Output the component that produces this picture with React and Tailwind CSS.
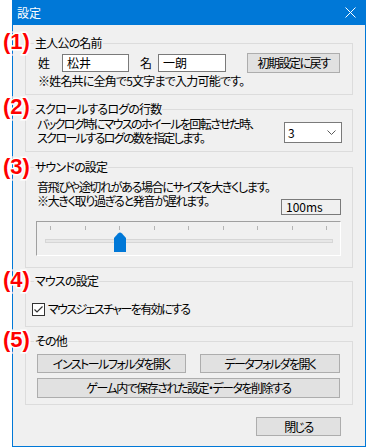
import React from 'react';

const font = "[font-family:'Noto_Sans_CJK_JP',sans-serif] [font-feature-settings:'palt']";

function Group({ title, className = '', children }) {
    return (
        <div className={`relative ml-[12px] w-[328px] border border-[#dcdcdc] ${className}`}>
            <span className="absolute left-[8px] -top-[9px] whitespace-nowrap bg-[#f0f0f0] px-px text-[12px] leading-[16px] tracking-[-0.8px]">
                {title}
            </span>
            {children}
        </div>
    );
}

function Btn({ className = '', children }) {
    return (
        <div className={`flex items-center justify-center whitespace-nowrap border border-[#adadad] bg-[#e1e1e1] text-[12px] leading-none tracking-[-1.5px] ${className}`}>
            {children}
        </div>
    );
}

function Num({ n, top }) {
    return (
        <span
            className="absolute left-[3px] text-[22px] font-bold leading-[22px] text-[#ff0000] [font-family:'Liberation_Sans',sans-serif] [-webkit-text-stroke:3px_#fff] [paint-order:stroke_fill]"
            style={{ top }}
        >
            ({n})
        </span>
    );
}

export default function App() {
    const ticks = [0, 1, 2, 3, 4, 5, 6, 7, 8];

    return (
        <div className={`relative h-[447px] w-[366px] bg-white text-black ${font}`}>
            <div className="ml-[12px] flex h-[447px] w-[354px] flex-col bg-[#0078d7] px-px pb-px">
                {/* Title bar */}
                <div className="flex h-[25px] items-center justify-between pl-[4px] pr-[9px] text-[12px] text-white">
                    <span>設定</span>
                    <svg width="11" height="11" viewBox="0 0 11 11">
                        <path d="M0.5 0.5 L10.5 10.5 M10.5 0.5 L0.5 10.5" stroke="#fff" strokeWidth="1" />
                    </svg>
                </div>

                {/* Body */}
                <div className="flex flex-1 flex-col bg-[#f0f0f0]">
                    {/* (1) */}
                    <Group title="主人公の名前" className="mt-[18px] h-[52px]">
                        <div className="mt-[9px] flex h-[20px] items-center pl-[12px] text-[12px]">
                            <span className="w-[12px]">姓</span>
                            <div className="ml-[12px] flex h-[18px] w-[67px] items-center border border-[#7a7a7a] bg-white pl-[4px]">松井</div>
                            <span className="ml-[11px] w-[12px]">名</span>
                            <div className="ml-[6px] flex h-[18px] w-[68px] items-center border border-[#7a7a7a] bg-white pl-[4px]">一朗</div>
                            <Btn className="ml-[21px] h-[20px] w-[93px]">初期設定に戻す</Btn>
                        </div>
                        <div className="mt-[1px] whitespace-nowrap pl-[12px] text-[12px] leading-[14px] tracking-[-0.8px]">
                            ※姓名共に全角で5文字まで入力可能です。
                        </div>
                    </Group>

                    {/* (2) */}
                    <Group title="スクロールするログの行数" className="mt-[14px] h-[43px]">
                        <div className="flex items-start pl-[11px] pr-[10px]">
                            <div className="mt-[7px] whitespace-nowrap text-[12px] leading-[14px] tracking-[-1.6px]">
                                バックログ時にマウスのホイールを回転させた時、<br />
                                スクロールするログの数を指定します。
                            </div>
                            <div className="ml-auto mt-[12px] flex h-[21px] w-[58px] shrink-0 items-center justify-between border border-[#7a7a7a] bg-white pl-[3px] pr-[5px] text-[12px]">
                                <span>3</span>
                                <svg width="9" height="5" viewBox="0 0 9 5">
                                    <path d="M0.5 0.5 L4.5 4.5 L8.5 0.5" fill="none" stroke="#5a5a5a" strokeWidth="1" />
                                </svg>
                            </div>
                        </div>
                    </Group>

                    {/* (3) */}
                    <Group title="サウンドの設定" className="mt-[15px] h-[101px]">
                        <div className="flex items-start pl-[11px] pr-[11px]">
                            <div className="mt-[12px] whitespace-nowrap text-[12px] leading-[14px] tracking-[-1.3px]">
                                音飛びや途切れがある場合にサイズを大きくします。<br />
                                ※大きく取り過ぎると発音が遅れます。
                            </div>
                            <div className="ml-auto mt-[31px] flex h-[16px] w-[60px] shrink-0 items-center border border-[#7a7a7a] bg-[#f0f0f0] pl-[4px] text-[12px]">
                                100ms
                            </div>
                        </div>
                        <div className="relative ml-[10px] mt-[6px] h-[35px] w-[305px] border border-b-white border-l-[#a0a0a0] border-r-white border-t-[#a0a0a0]">
                            <div className="ml-[13px] mt-[4px] flex h-[4px] w-[277px] justify-between">
                                {ticks.map((t) => (
                                    <div key={t} className="h-[4px] w-px bg-[#b4b4b4]" />
                                ))}
                            </div>
                            <div className="ml-[8px] mt-[9px] h-[4px] w-[288px] border border-[#d6d6d6] bg-[#e7e7e7]" />
                            <svg className="absolute left-[77px] top-[10px]" width="12" height="20" viewBox="0 0 12 20">
                                <path d="M0 6 L4 1.5 Q6 -0.5 8 1.5 L12 6 L12 20 L0 20 Z" fill="#0078d7" />
                            </svg>
                        </div>
                    </Group>

                    {/* (4) */}
                    <Group title="マウスの設定" className="mt-[13px] h-[46px]">
                        <div className="mt-[18px] flex items-center pl-[6px] text-[12px]">
                            <svg width="13" height="13" viewBox="0 0 13 13">
                                <rect x="0.5" y="0.5" width="12" height="12" fill="#fff" stroke="#333" />
                                <path d="M2.5 6.5 L5 9 L10.5 3.5" fill="none" stroke="#333" strokeWidth="1.2" />
                            </svg>
                            <span className="ml-[3px] tracking-[-1.6px]">マウスジェスチャーを有効にする</span>
                        </div>
                    </Group>

                    {/* (5) */}
                    <Group title="その他" className="mt-[14px] h-[64px]">
                        <div className="mt-[12px] flex pl-[11px]">
                            <Btn className="h-[19px] w-[149px]">インストールフォルダを開く</Btn>
                            <Btn className="ml-[14px] h-[19px] w-[140px]">データフォルダを開く</Btn>
                        </div>
                        <Btn className="ml-[11px] mt-[5px] h-[20px] w-[303px]">ゲーム内で保存された設定・データを削除する</Btn>
                    </Group>

                    <Btn className="ml-auto mr-[24px] mt-[12px] h-[19px] w-[85px]">閉じる</Btn>
                </div>
            </div>

            <Num n="1" top={31} />
            <Num n="2" top={96} />
            <Num n="3" top={156} />
            <Num n="4" top={269} />
            <Num n="5" top={329} />
        </div>
    );
}
